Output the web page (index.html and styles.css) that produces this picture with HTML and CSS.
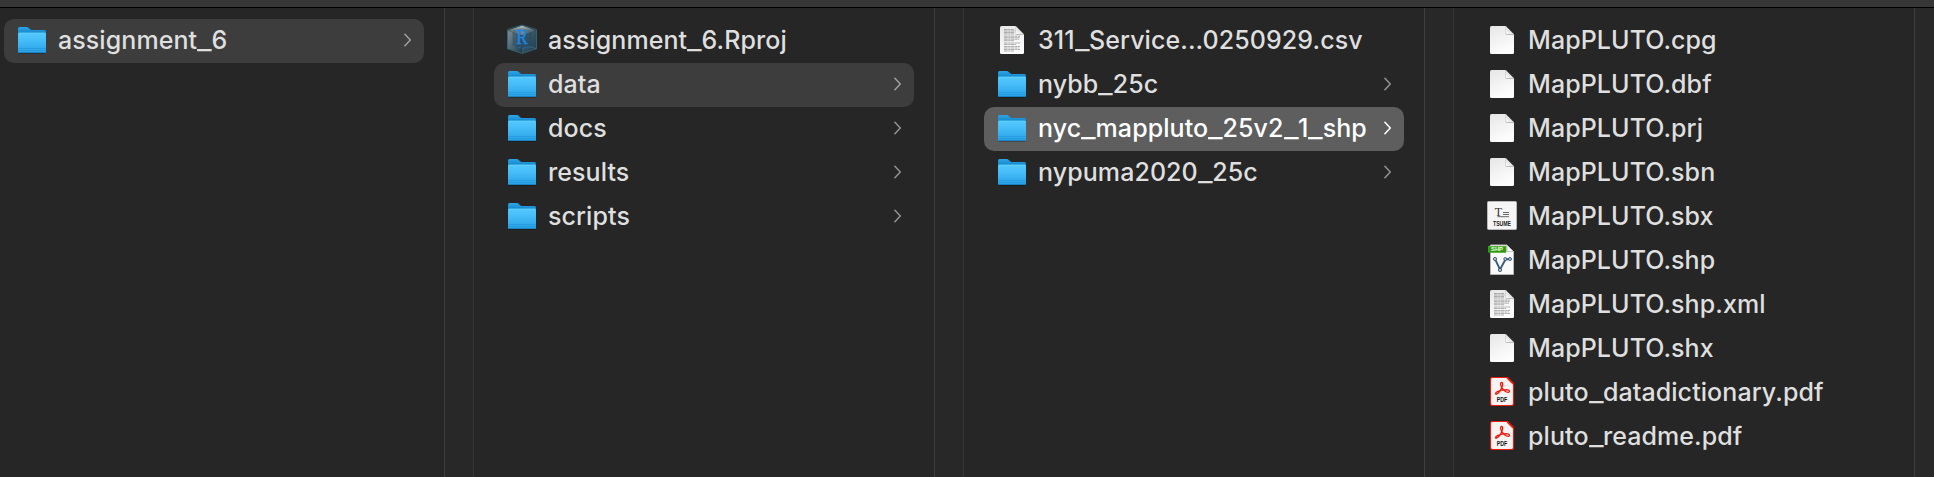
FILE: index.html
```html
<!DOCTYPE html>
<html lang="en">
<head>
<meta charset="utf-8">
<title>assignment_6</title>
<link rel="stylesheet" href="styles.css">
</head>
<body>
<svg class="defs" aria-hidden="true">
  <defs>
    <linearGradient id="folder-back" x1="0" y1="0" x2="0" y2="1"><stop offset="0" stop-color="#2ba6e6"/><stop offset=".25" stop-color="#1585cb"/><stop offset="1" stop-color="#1585cb"/></linearGradient>
    <linearGradient id="folder-front" x1="0" y1="0" x2="0" y2="1"><stop offset="0" stop-color="#54c9ff"/><stop offset=".4" stop-color="#46bcf8"/><stop offset="1" stop-color="#27a0e5"/></linearGradient>
    <linearGradient id="paper" x1="0" y1="0" x2=".4" y2="1"><stop offset="0" stop-color="#e6e6e6"/><stop offset="1" stop-color="#fdfdfd"/></linearGradient>
    <linearGradient id="fold" x1="0" y1="1" x2=".6" y2=".4"><stop offset="0" stop-color="#fff"/><stop offset="1" stop-color="#d8d8d8"/></linearGradient>
    <linearGradient id="cube-left" x1="0" y1="0" x2="1" y2="1"><stop offset="0" stop-color="#7d8f97"/><stop offset="1" stop-color="#1c3b4b"/></linearGradient>
    <linearGradient id="cube-right" x1="0" y1="0" x2="1" y2="1"><stop offset="0" stop-color="#4d646f"/><stop offset="1" stop-color="#1b3e52"/></linearGradient>
    <linearGradient id="cube-top" x1="0" y1="0" x2="1" y2="0"><stop offset="0" stop-color="#52666f"/><stop offset=".5" stop-color="#a9b3b7"/><stop offset="1" stop-color="#31505f"/></linearGradient>
  </defs>
  <symbol id="folder" viewBox="0 0 32 32">
    <path d="M2.500 28.700H29.500V29.800H2.500Z" fill="#000" opacity=".3"/>
    <path d="M2 27.500V4.500Q2 3 3.500 3H10.500Q12 3 13 4.200T15.500 6H28.500Q30 6 30 7.500V28H2Z" fill="url(#folder-back)"/>
    <path d="M2 9.500Q2 8.700 3 8.700H29Q30 8.700 30 9.500V27.800Q30 29 28.800 29H3.200Q2 29 2 27.800Z" fill="url(#folder-front)"/>
    <path d="M3 9.200H29" stroke="#64d4ff" stroke-width=".8"/>
    <path d="M2 24.500H30M2 26.500H30" stroke="#1c92d6" stroke-width=".7" opacity=".75"/>
    <path d="M2.500 28.500H29.500" stroke="#1585c8"/>
  </symbol>
  <symbol id="page" viewBox="0 0 32 32">
    <path d="M5.500 2H19.500L28 10.500V28.500Q28 30 26.500 30H5.500Q4 30 4 28.500V3.500Q4 2 5.500 2Z" fill="url(#paper)"/>
    <path d="M19.500 2V9.700Q19.500 11 21 11H28.300Z" fill="#bdbdbd"/>
    <path d="M20 2.500V9.300Q20 10 20.700 10H27.500Z" fill="url(#fold)"/>
  </symbol>
  <symbol id="text-page" viewBox="0 0 32 32">
    <use href="#page"/>
    <path d="M8 5.500H18M8 7H18.500M8 8.500H18M8 10H18M8 12.200H24M8 13.700H23.500M8 15.200H23M8 16.700H18M8 19H24M8 20.500H20M8 22.500H24M8 24H23M8 25.500H24M8 27H18" stroke="#6f6f6f" stroke-width=".9" stroke-dasharray="3.700 .5 2.300 .4" opacity=".6"/>
  </symbol>
  <symbol id="chevron" viewBox="0 0 8 14"><path d="M.9 1.300L6.300 7L.9 12.700" fill="none" stroke="currentColor" stroke-width="1.500" stroke-linejoin="round" stroke-linecap="round"/></symbol>
</svg>

<div class="toolbar-edge"></div>
<main class="browser">
  <section class="column">
    <ul class="list">
      <li class="row row-open"><svg class="icon"><use href="#folder"/></svg><span class="name">assignment<span class="us">_</span>6</span><svg class="chevron"><use href="#chevron"/></svg></li>
    </ul>
    <div class="gutter"></div>
  </section>
  <section class="column">
    <ul class="list">
      <li class="row">
        <svg class="icon" viewBox="0 0 32 32">
          <path d="M1.500 6.500L16 11V29.500L1.500 24.700Z" fill="url(#cube-left)"/>
          <path d="M16 11L30.500 6.500V24.700L16 29.500Z" fill="url(#cube-right)"/>
          <path d="M16 1.500L30.500 6.500L16 11L1.500 6.500Z" fill="url(#cube-top)"/>
          <path d="M6.500 6.800L16 4L25.500 6.800V22L16 25L6.500 22Z" fill="#21465c" opacity=".4"/>
          <path d="M1.500 5.500V24.700L16 29.500L30.500 24.700V5.500L16 1Z" fill="none" stroke="#346477" stroke-width=".9"/>
          <path d="M1.500 24.700L9 22.500M30.500 24.700L23 22.500" stroke="#42707f" stroke-width=".7"/>
          <path d="M12 24L15 22.700M16 25L20 23M21 24L23 23" stroke="#1974bd" stroke-width=".8"/>
          <text x="16" y="20" class="glyph-r" textLength="11.500" lengthAdjust="spacingAndGlyphs">R</text>
        </svg>
        <span class="name">assignment<span class="us">_</span>6.Rproj</span>
      </li>
      <li class="row row-open"><svg class="icon"><use href="#folder"/></svg><span class="name">data</span><svg class="chevron"><use href="#chevron"/></svg></li>
      <li class="row"><svg class="icon"><use href="#folder"/></svg><span class="name">docs</span><svg class="chevron"><use href="#chevron"/></svg></li>
      <li class="row"><svg class="icon"><use href="#folder"/></svg><span class="name">results</span><svg class="chevron"><use href="#chevron"/></svg></li>
      <li class="row"><svg class="icon"><use href="#folder"/></svg><span class="name">scripts</span><svg class="chevron"><use href="#chevron"/></svg></li>
    </ul>
    <div class="gutter"></div>
  </section>
  <section class="column">
    <ul class="list">
      <li class="row"><svg class="icon"><use href="#text-page"/></svg><span class="name">311<span class="us">_</span>Service...0250929.csv</span></li>
      <li class="row"><svg class="icon"><use href="#folder"/></svg><span class="name">nybb<span class="us">_</span>25c</span><svg class="chevron"><use href="#chevron"/></svg></li>
      <li class="row row-selected"><svg class="icon"><use href="#folder"/></svg><span class="name">nyc<span class="us">_</span>mappluto<span class="us">_</span>25v2<span class="us">_</span>1<span class="us">_</span>shp</span><svg class="chevron"><use href="#chevron"/></svg></li>
      <li class="row"><svg class="icon"><use href="#folder"/></svg><span class="name">nypuma2020<span class="us">_</span>25c</span><svg class="chevron"><use href="#chevron"/></svg></li>
    </ul>
    <div class="gutter"></div>
  </section>
  <section class="column">
    <ul class="list">
      <li class="row"><svg class="icon"><use href="#page"/></svg><span class="name">MapPLUTO.cpg</span></li>
      <li class="row"><svg class="icon"><use href="#page"/></svg><span class="name">MapPLUTO.dbf</span></li>
      <li class="row"><svg class="icon"><use href="#page"/></svg><span class="name">MapPLUTO.prj</span></li>
      <li class="row"><svg class="icon"><use href="#page"/></svg><span class="name">MapPLUTO.sbn</span></li>
      <li class="row">
        <svg class="icon" viewBox="0 0 32 32">
          <rect x="1.500" y="1.500" width="29" height="28" rx="1" fill="#f5f5f5" stroke="#b9b9b9"/>
          <text x="12.500" y="16" class="glyph-t">T</text>
          <path d="M17 12.500H23M17 14.500H23M11.500 16.700H23" stroke="#444" stroke-width=".8"/>
          <text x="16" y="26" class="glyph-tsume" textLength="18" lengthAdjust="spacingAndGlyphs">TSUME</text>
        </svg>
        <span class="name">MapPLUTO.sbx</span>
      </li>
      <li class="row">
        <svg class="icon" viewBox="0 0 32 32">
          <path d="M4.500 1H21L27.500 7.500V30.500H4.500Z" fill="#fafafa" stroke="#b5b5b5"/>
          <path d="M21 1.200V7.500H27.500Z" fill="#fff" stroke="#aaa" stroke-width=".7"/>
          <path d="M9 15L14 25.500L19.500 15.500L24 15" fill="none" stroke="#3d5c7c" stroke-width="1.900"/>
          <g fill="#b8cbdc" stroke="#34506d" stroke-width=".9"><circle cx="9" cy="15" r="1.600"/><circle cx="14" cy="26" r="1.600"/><circle cx="19.300" cy="15" r="1.500"/><circle cx="24" cy="15" r="1.500"/></g>
          <rect x="2" y="2" width="18.300" height="6.700" rx=".8" fill="#329b12"/>
          <path d="M2.500 2.500H19.500" stroke="#55b838"/>
          <text x="11" y="7.300" class="glyph-shp" textLength="12" lengthAdjust="spacingAndGlyphs">SHP</text>
        </svg>
        <span class="name">MapPLUTO.shp</span>
      </li>
      <li class="row"><svg class="icon"><use href="#text-page"/></svg><span class="name">MapPLUTO.shp.xml</span></li>
      <li class="row"><svg class="icon"><use href="#page"/></svg><span class="name">MapPLUTO.shx</span></li>
      <li class="row">
        <svg class="icon" viewBox="0 0 32 32">
          <path d="M6.500 1.500H21.500L27.500 7.500V27.500Q27.500 29.500 25.500 29.500H6.500Q4.500 29.500 4.500 27.500V3.500Q4.500 1.500 6.500 1.500Z" fill="#f6f3f2" stroke="#f01a0a" stroke-width="1.100"/>
          <path d="M21.300 1.800L27.300 7.800" stroke="#f01a0a" stroke-width="1.700"/>
          <path d="M15.800 6.500C14 6.500 14.500 9 15.500 11C16.800 13.500 20 16.500 22.500 16.300C24.500 16 23.500 13.800 20.500 13.700C17 13.700 13.500 14.500 11.500 15.500C9.200 16.700 9 18.300 10.500 18C12.800 17.500 15.300 13 16.300 10C16.900 8 16.800 6.500 15.800 6.500Z" fill="none" stroke="#f01a0a" stroke-width="1.300"/>
          <text x="16" y="26" class="glyph-pdf" textLength="10.500" lengthAdjust="spacingAndGlyphs">PDF</text>
        </svg>
        <span class="name">pluto<span class="us">_</span>datadictionary.pdf</span>
      </li>
      <li class="row">
        <svg class="icon" viewBox="0 0 32 32">
          <path d="M6.500 1.500H21.500L27.500 7.500V27.500Q27.500 29.500 25.500 29.500H6.500Q4.500 29.500 4.500 27.500V3.500Q4.500 1.500 6.500 1.500Z" fill="#f6f3f2" stroke="#f01a0a" stroke-width="1.100"/>
          <path d="M21.300 1.800L27.300 7.800" stroke="#f01a0a" stroke-width="1.700"/>
          <path d="M15.800 6.500C14 6.500 14.500 9 15.500 11C16.800 13.500 20 16.500 22.500 16.300C24.500 16 23.500 13.800 20.500 13.700C17 13.700 13.500 14.500 11.500 15.500C9.200 16.700 9 18.300 10.500 18C12.800 17.500 15.300 13 16.300 10C16.900 8 16.800 6.500 15.800 6.500Z" fill="none" stroke="#f01a0a" stroke-width="1.300"/>
          <text x="16" y="26" class="glyph-pdf" textLength="10.500" lengthAdjust="spacingAndGlyphs">PDF</text>
        </svg>
        <span class="name">pluto<span class="us">_</span>readme.pdf</span>
      </li>
    </ul>
    <div class="gutter"></div>
  </section>
</main>
</body>
</html>
```
FILE: styles.css
```css
* { box-sizing: border-box; }

body {
  margin: 0;
  height: 477px;
  overflow: hidden;
  display: flex;
  flex-direction: column;
  background: #262626;
  color: #dfdfdf;
  font-family: Inter, "Liberation Sans", sans-serif;
}

.defs { position: absolute; width: 0; height: 0; }

.toolbar-edge {
  flex: none;
  height: 8px;
  background: #363636;
  border-bottom: 1px solid #000;
}

.browser { flex: 1; display: flex; }

.column { flex: none; width: 490px; display: flex; }
.column:first-child { width: 474px; }
.column:first-child .list { padding-left: 4px; }

.list {
  flex: 1;
  margin: 0;
  padding: 11px 20px 0 20px;
  list-style: none;
}

.gutter {
  width: 30px;
  border-left: 1px solid #3e3e3e;
  border-right: 1px solid #363636;
  background: #282828;
}

.row {
  display: flex;
  align-items: center;
  height: 44px;
  padding: 0 12px;
  border-radius: 10px;
}

.row-open { background: #3d3d3d; }
.row-selected { background: #5e5e5e; color: #fff; }

.icon { flex: none; width: 32px; height: 32px; margin-top: -2px; }

.name {
  flex: 1;
  margin: -2px 0 0 10px;
  font-size: 25px;
  font-weight: 450;
  letter-spacing: .08px;
  line-height: 42px;
  white-space: nowrap;
}

/* Inter's underscore is narrow; widen it to a full digit's width */
.us {
  display: inline-block;
  margin-right: 2.7px;
  transform: scaleX(1.26);
  transform-origin: left;
}

.chevron { flex: none; width: 8px; height: 14px; margin-top: -2px; color: #929292; }
.row-open .chevron { color: #a0a0a0; }
.row-selected .chevron { color: #fff; }

.glyph-r { font: 20px "Liberation Serif", serif; fill: #1788e8; stroke: #1788e8; stroke-width: .3; text-anchor: middle; }
.glyph-t { font: 12px "Liberation Serif", serif; fill: #333; text-anchor: middle; }
.glyph-tsume { font: bold 7px "Liberation Sans", sans-serif; fill: #222; text-anchor: middle; }
.glyph-shp { font: bold 5px "Liberation Sans", sans-serif; fill: #e8ffe0; text-anchor: middle; }
.glyph-pdf { font: bold 7.300px "Liberation Sans", sans-serif; fill: #151515; text-anchor: middle; }
```
